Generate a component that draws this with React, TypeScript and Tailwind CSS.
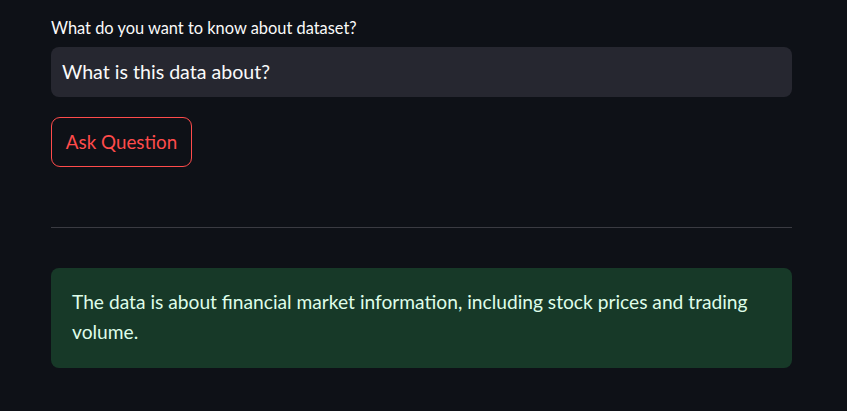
export default function App() {
    return (
        <div className="min-h-screen w-full bg-[#0e1117] font-['Source_Sans_Pro',Lato,sans-serif]">
            <div className="ml-[51px] w-[741px] pt-[17px]">
                <label className="block h-[22px] text-[16.4px] leading-[22px] text-[#fafafa]">
                    What do you want to know about dataset?
                </label>
                <div className="mt-[8px] flex h-[50px] items-center rounded-lg bg-[#262730] px-[11px]">
                    <span className="text-[19.6px] text-[#fafafa]">What is this data about?</span>
                </div>
                <button className="mt-[20px] flex h-[50px] w-[141px] items-center justify-center rounded-[9px] border border-[#ff4b4b] bg-[#0e1117] text-[18.8px] text-[#ff4b4b]">
                    Ask Question
                </button>
                <hr className="mt-[60px] border-0 border-t border-[#3a3b42]" />
                <div className="mt-[40px] rounded-lg bg-[#173928] px-[21px] pt-[19px] pb-[21px]">
                    <p className="text-[19.2px] leading-[30px] text-[#dffde9]">
                        The data is about financial market information, including stock prices and trading volume.
                    </p>
                </div>
            </div>
        </div>
    );
}
